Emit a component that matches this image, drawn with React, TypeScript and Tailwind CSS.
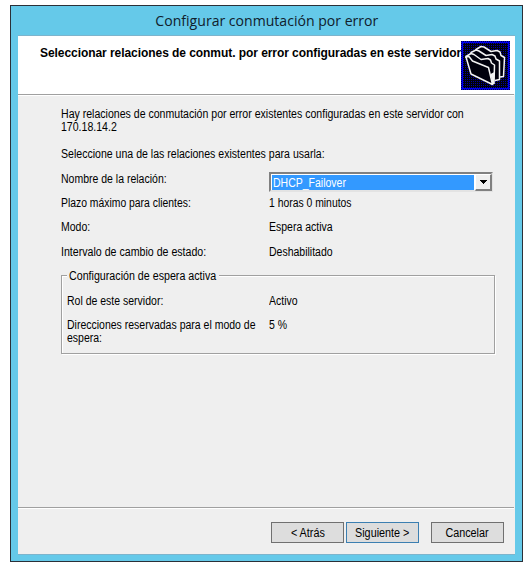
import React from "react";

const FolderIcon = () => (
  <svg width="49" height="49" viewBox="0 0 49 49" className="block">
    <defs>
      <pattern id="dither" width="2" height="2" patternUnits="userSpaceOnUse">
        <rect width="2" height="2" fill="#000008" />
        <rect width="1" height="1" fill="#0000a0" />
      </pattern>
      <pattern id="edge" width="2" height="2" patternUnits="userSpaceOnUse">
        <rect width="2" height="2" fill="#0000f0" />
        <rect width="1" height="1" fill="#000040" />
      </pattern>
    </defs>
    <rect width="49" height="49" fill="url(#edge)" />
    <rect x="2" y="2" width="45" height="45" fill="url(#dither)" />
    <g fill="#00000c" stroke="#f4f4f4" strokeWidth="1.5" strokeLinejoin="round">
      <path d="M15 10 L15 8.5 L20 5.5 L23 6 L30 10.5 L36 9.5 L39 11 L40 14.5 L43.5 16.5 L42.5 35.5 L39 36" />
      <path d="M10 13 L10 11.5 L15 9 L18 10 L25 14.5 L31 13.5 L34 15 L35 18 L38.5 20 L38.5 38.5 L34 39.5" />
      <path d="M5 17 L5 15.5 L10 12.5 L13 13.5 L20 18.5 L27 17.5 L29.5 19 L30.5 22 L33.5 24 L33 43" />
      <path d="M5 16 L8 15.5 L11.5 20 L27.5 26.5 L31.5 43.5 L10 33 Z" />
    </g>
    <path d="M29.5 33 L33.5 31 L33 43 L31.5 44 Z" fill="#f4f4f4" />
  </svg>
);

/* Condensed dialog type */
const T = ({ children, className = "scale-x-[0.875]" }: { children: React.ReactNode; className?: string }) => (
  <span className={`inline-block origin-left ${className}`}>{children}</span>
);

const Row = ({ label, value, className }: { label: React.ReactNode; value: React.ReactNode; className: string }) => (
  <div className={`flex ${className}`}>
    <div className="w-[208px]">{label}</div>
    <div>{value}</div>
  </div>
);

const Button = ({ children, className }: { children: React.ReactNode; className: string }) => (
  <button className={`flex h-[21px] w-[73px] items-center justify-center border bg-[#dddddd] pt-px ${className}`}>
    <span className="inline-block scale-x-[0.9]">{children}</span>
  </button>
);

export default function App() {
  return (
    <div className="h-[569px] w-[526px] overflow-hidden bg-white pl-[10px] pt-[5px] font-['Liberation_Sans',sans-serif] text-[12px] leading-[13px] whitespace-nowrap text-black">
      <div className="flex h-[557px] w-[513px] flex-col border border-[#2b3038] bg-[#65c9e9] px-[7px]">
        <div className="flex h-[29px] items-center justify-center font-['Open_Sans',sans-serif] text-[15px] leading-[20px] text-[#10202c]">
          <h1 className="-mt-px scale-x-[0.938]">Configurar conmutación por error</h1>
        </div>
        <main className="flex h-[520px] flex-col border-y border-[#7db4cc] bg-[#efefef]">
          <header className="flex h-[58px] shrink-0 bg-white pl-[22px]">
            <h2 className="w-[421px] pt-[11px] text-[12px] font-bold leading-[13px] tracking-[-0.06px]">
              Seleccionar relaciones de conmut. por error configuradas en este servidor
            </h2>
            <div className="pt-[5px]">
              <FolderIcon />
            </div>
          </header>
          <div className="mr-px h-[2px] shrink-0 border-b border-t border-b-white border-t-[#a0a0a0]" />
          <section className="h-[411px] pl-[43px] pt-[12px]">
            <p className="w-[440px]">
              <T className="scale-x-[0.88]">
                Hay relaciones de conmutación por error existentes configuradas en este servidor con
                <br />
                170.18.14.2
              </T>
            </p>
            <p className="mt-[14px]">
              <T className="scale-x-[0.88]">Seleccione una de las relaciones existentes para usarla:</T>
            </p>
            <div className="mt-[11px] flex h-[21px]">
              <div className="w-[208px] pt-px">
                <T>Nombre de la relación:</T>
              </div>
              <div className="flex h-[20px] w-[224px] border-2 border-b-[#e3e3e3] border-l-[#808080] border-r-[#e3e3e3] border-t-[#808080] bg-white">
                <div className="ml-px mt-px h-[15px] w-[202px] bg-[#3399ff] pl-[1px] leading-[16px] text-white">
                  <T>DHCP_Failover</T>
                </div>
                <div className="ml-px -mb-px -mr-px flex w-[17px] items-center justify-center border-b-2 border-l border-r-2 border-t border-b-[#808080] border-l-white border-r-[#808080] border-t-white bg-[#efefef]">
                  <svg width="7" height="4" viewBox="0 0 7 4" shapeRendering="crispEdges">
                    <path d="M0 0H7V1H6V2H5V3H4V4H3V3H2V2H1V1H0Z" />
                  </svg>
                </div>
              </div>
            </div>
            <Row
              className="mt-[4px]"
              label={<T className="scale-x-[0.865]">Plazo máximo para clientes:</T>}
              value={<T className="scale-x-[0.865]">1 horas 0 minutos</T>}
            />
            <Row className="mt-[11px]" label={<T>Modo:</T>} value={<T>Espera activa</T>} />
            <Row
              className="mt-[12px]"
              label={<T className="scale-x-[0.885]">Intervalo de cambio de estado:</T>}
              value={<T>Deshabilitado</T>}
            />
            <section className="mt-[16px] h-[79px] w-[434px] border border-[#a0a0a0] shadow-[1px_1px_0_white,inset_1px_1px_0_white]">
              <div className="-mt-[6px] ml-[5px] w-[152px] bg-[#efefef] pl-[2px]">
                <T className="scale-x-[0.89]">Configuración de espera activa</T>
              </div>
              <div className="flex pl-[5px] pt-[12px]">
                <div className="w-[202px]">
                  <T>Rol de este servidor:</T>
                </div>
                <T>Activo</T>
              </div>
              <div className="flex pl-[5px] pt-[11px]">
                <div className="w-[202px]">
                  <T>
                    Direcciones reservadas para el modo de
                    <br />
                    espera:
                  </T>
                </div>
                <div>
                  <T>5 %</T>
                </div>
              </div>
            </section>
          </section>
          <div className="mr-px h-[2px] shrink-0 border-b border-t border-b-white border-t-[#a0a0a0]" />
          <footer className="flex pl-[253px] pt-[13px]">
            <Button className="border-[#707070]">&lt; Atrás</Button>
            <Button className="ml-[2px] border-[#3c7fb1]">Siguiente &gt;</Button>
            <Button className="ml-[12px] border-[#707070]">Cancelar</Button>
          </footer>
        </main>
      </div>
    </div>
  );
}
